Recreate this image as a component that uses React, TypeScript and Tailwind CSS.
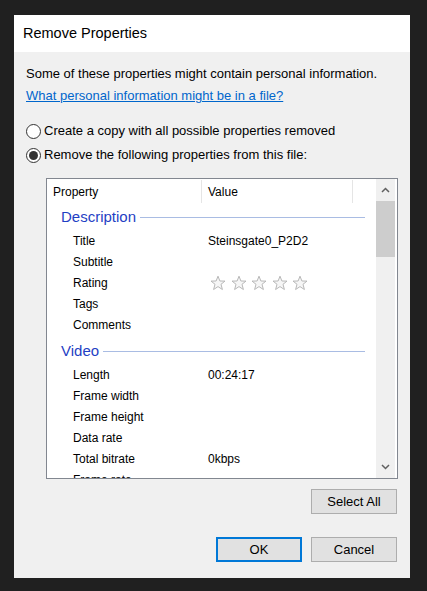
import React from "react";

const Star = () => (
  <svg width="16" height="16" viewBox="0 0 16 16">
    <polygon
      points="8,1.2 9.9,6 15,6.1 11,9.3 12.4,14.5 8,11.6 3.6,14.5 5,9.3 1,6.1 6.1,6"
      fill="#f6f6f6"
      stroke="#b8b8b8"
      strokeWidth="1"
      strokeLinejoin="round"
    />
  </svg>
);

const Chevron = ({ up }: { up?: boolean }) => (
  <svg width="9" height="6" viewBox="0 0 9 6">
    <path
      d={up ? "M1 5 L4.5 1.5 L8 5" : "M1 1 L4.5 4.5 L8 1"}
      fill="none"
      stroke="#606060"
      strokeWidth="1.5"
    />
  </svg>
);

const Row = ({ label, value }: { label: string; value?: React.ReactNode }) => (
  <div className="h-[21px] flex items-center shrink-0">
    <div className="w-[155px] pl-[26px] whitespace-nowrap">{label}</div>
    <div className="pl-[6px] whitespace-nowrap">{value}</div>
  </div>
);

const Group = ({ title, mt }: { title: string; mt: string }) => (
  <div className={`h-[26px] flex items-center pl-[14px] pr-[11px] shrink-0 ${mt}`}>
    <span className="text-[15px] text-[#1f3fc4] whitespace-nowrap">{title}</span>
    <div className="flex-1 h-px bg-[#a9bce3] ml-[4px]" />
  </div>
);

export default function App() {
  return (
    <div className="w-[427px] h-[591px] bg-[#202020] pt-[15px] pl-[14px] font-['Liberation_Sans',Arial,sans-serif] text-black">
      <div className="w-[396px] h-[563px] bg-[#f0f0f0] flex flex-col">
        <div className="h-[37px] bg-white flex items-center pl-[9px] text-[14.5px] shrink-0">
          Remove Properties
        </div>
        <div className="px-[12px] pt-[14px] text-[13px] leading-[16px]">
          <div>Some of these properties might contain personal information.</div>
          <div className="mt-[6px]">
            <a className="text-[#0066cc] underline cursor-pointer">What personal information might be in a file?</a>
          </div>
          <div className="h-[20px] mt-[17px] flex items-center">
            <div className="w-[15px] h-[15px] rounded-full border border-[#333333] bg-white" />
            <span className="ml-[3px]">Create a copy with all possible properties removed</span>
          </div>
          <div className="h-[20px] mt-[4px] flex items-center">
            <div className="w-[15px] h-[15px] rounded-full border border-[#333333] bg-white flex items-center justify-center">
              <div className="w-[9px] h-[9px] rounded-full bg-[#333333]" />
            </div>
            <span className="ml-[3px]">Remove the following properties from this file:</span>
          </div>
          <div className="mt-[13px] ml-[20px] w-[352px] h-[301px] border border-[#828790] bg-white flex text-[12px]">
            <div className="flex-1 overflow-hidden flex flex-col">
              <div className="h-[24px] flex shrink-0">
                <div className="w-[155px] pl-[6px] flex items-center border-r border-[#e5e5e5] mt-[1px]">Property</div>
                <div className="w-[151px] pl-[6px] flex items-center border-r border-[#e5e5e5] mt-[1px]">Value</div>
              </div>
              <Group title="Description" mt="mt-[1px]" />
              <Row label="Title" value="Steinsgate0_P2D2" />
              <Row label="Subtitle" />
              <Row
                label="Rating"
                value={
                  <div className="flex gap-[4.5px] ml-[2px]">
                    <Star />
                    <Star />
                    <Star />
                    <Star />
                    <Star />
                  </div>
                }
              />
              <Row label="Tags" />
              <Row label="Comments" />
              <Group title="Video" mt="mt-[3px]" />
              <Row label="Length" value="00:24:17" />
              <Row label="Frame width" />
              <Row label="Frame height" />
              <Row label="Data rate" />
              <Row label="Total bitrate" value="0kbps" />
              <Row label="Frame rate" />
            </div>
            <div className="w-[19px] bg-[#f0f0f0] flex flex-col">
              <div className="h-[22px] flex items-center justify-center">
                <Chevron up />
              </div>
              <div className="h-[56px] bg-[#cdcdcd]" />
              <div className="flex-1" />
              <div className="h-[22px] flex items-center justify-center">
                <Chevron />
              </div>
            </div>
            <div className="w-[2px]" />
          </div>
        </div>
        <div className="flex justify-end pr-[13px] mt-[10px] text-[13px]">
          <button className="w-[86px] h-[25px] bg-[#e1e1e1] border border-[#adadad]">Select All</button>
        </div>
        <div className="flex justify-end gap-[9px] pr-[13px] mt-[23px] text-[13px]">
          <button className="w-[86px] h-[25px] bg-[#e1e1e1] border-2 border-[#0078d7]">OK</button>
          <button className="w-[86px] h-[25px] bg-[#e1e1e1] border border-[#adadad]">Cancel</button>
        </div>
      </div>
    </div>
  );
}
